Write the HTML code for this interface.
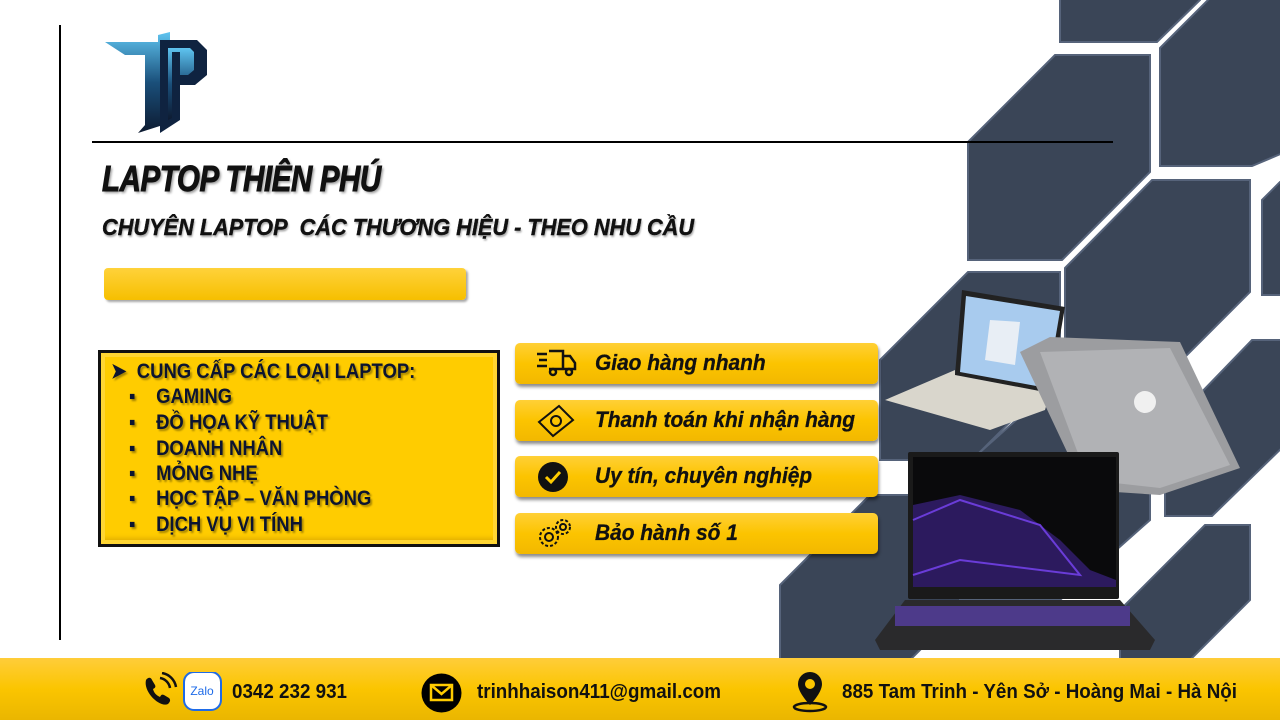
<!DOCTYPE html>
<html><head><meta charset="utf-8"><style>
*{margin:0;padding:0;box-sizing:border-box}
body{width:1280px;height:720px;position:relative;overflow:hidden;background:#fff;font-family:"Liberation Sans",sans-serif}
.abs{position:absolute}
.title{left:102px;top:158px;font-size:36px;font-weight:bold;font-style:italic;color:#111;transform:scaleX(.82);transform-origin:left top;text-shadow:2px 2px 3px rgba(0,0,0,.4);white-space:nowrap;letter-spacing:-0.5px;-webkit-text-stroke:1px #111}
.sub{left:102px;top:214px;font-size:23px;font-weight:bold;font-style:italic;color:#111;transform:scaleX(.945);transform-origin:left top;text-shadow:1px 2px 2px rgba(0,0,0,.35);white-space:nowrap;-webkit-text-stroke:.4px #111}
.bar{left:104px;top:268px;width:362px;height:32px;border-radius:4px;background:linear-gradient(#ffd23a,#f6bf00);box-shadow:2px 2px 2px rgba(0,0,0,.35)}
.box{left:98px;top:350px;width:402px;height:197px;border:3px solid #111;background:#ffcc00;box-shadow:inset 0 0 0 4px #ffd633, inset 0 -6px 4px rgba(200,150,0,.5)}
.box div{position:absolute;font-size:21px;font-weight:bold;color:#0c1430;transform:scaleX(.88);transform-origin:left top;white-space:nowrap;text-shadow:2px 2px 2px rgba(0,0,0,.35)}
.btn{left:515px;width:363px;height:41px;border-radius:5px;background:linear-gradient(#ffd036,#fcc400 50%,#f2b800);box-shadow:1px 3px 3px rgba(0,0,0,.45)}
.btn span{position:absolute;left:80px;top:7px;font-size:22px;font-weight:bold;font-style:italic;color:#111;transform:scaleX(.95);transform-origin:left top;white-space:nowrap;-webkit-text-stroke:.3px #111}
.btn svg{position:absolute;left:20px;top:4px}
.foot{left:0;top:658px;width:1280px;height:62px;background:linear-gradient(#ffcd3a,#fbc500 50%,#eab600)}
.ft{font-size:20px;font-weight:bold;color:#111;top:681px;white-space:nowrap;transform:scaleX(.94);transform-origin:left top}
</style></head><body>
<svg class="abs" style="left:0;top:0" width="1280" height="720">
<g fill="#3a4557" stroke="#56637a" stroke-width="2">
<polygon points="1060,-2 1200,-2 1200,0 1157,42 1060,42"/>
<polygon points="1160,48 1210,-2 1290,-2 1290,150 1252,166 1160,166"/>
<polygon points="968,142 1055,55 1150,55 1150,172 1062,260 968,260"/>
<polygon points="1262,200 1280,182 1290,182 1290,295 1262,295"/>
<polygon points="1065,268 1152,180 1250,180 1250,292 1162,380 1065,380"/>
<polygon points="880,360 968,272 1060,272 1060,372 972,460 880,460"/>
<polygon points="1165,430 1252,340 1290,340 1290,440 1212,516 1165,516"/>
<polygon points="780,585 870,495 960,495 960,610 870,700 780,700"/>
<polygon points="1120,610 1205,525 1250,525 1250,600 1170,680 1120,680"/>
<polygon points="960,470 1050,390 1150,390 1150,520 1060,600 960,600"/>
</g>
<line x1="60" y1="25" x2="60" y2="640" stroke="#000" stroke-width="2"/>
<line x1="92" y1="142" x2="1113" y2="142" stroke="#000" stroke-width="2"/>
<defs><linearGradient id="lg" x1="0" y1="0" x2="0" y2="1"><stop offset="0" stop-color="#5fc4f0"/><stop offset=".5" stop-color="#1a4f7a"/><stop offset="1" stop-color="#0d1a30"/></linearGradient></defs>
<polygon points="105,42 158,42 158,35 170,32 170,42 168,50 163,52 163,125 138,133 145,125 145,55 125,55" fill="url(#lg)"/>
<polygon points="160,40 197,40 207,50 207,75 195,85 180,85 180,120 160,133" fill="#0f2340"/>
<polygon points="168,48 190,48 194,52 194,70 188,75 180,75 180,52 172,52 172,118 168,120" fill="url(#lg)"/>
<polygon points="962,290 1065,307 1050,393 955,375" fill="#222"/>
<polygon points="966,296 1060,311 1047,388 960,372" fill="#a8cbee"/>
<polygon points="990,320 1020,322 1015,365 985,360" fill="#e8eef5"/>
<polygon points="955,375 1050,393 1045,410 990,430 885,400 955,370" fill="#d9d6cc"/>
<polygon points="1020,352 1050,337 1180,342 1240,468 1160,495 1085,490" fill="#9c9da0"/>
<polygon points="1040,352 1170,348 1230,465 1160,488 1088,480" fill="#b1b2b5"/>
<circle cx="1145" cy="402" r="11" fill="#f0f0f0"/>
<rect x="908" y="452" width="211" height="147" rx="2" fill="#1a1a1a"/>
<rect x="913" y="457" width="203" height="130" fill="#0a0a0c"/>
<polygon points="913,505 960,495 1020,510 1060,540 1090,570 1116,580 1116,587 913,587" fill="#2c1a5e"/>
<polyline points="913,520 960,500 1040,525 1080,575 960,560 913,575" fill="none" stroke="#6a3cd8" stroke-width="2"/>
<polygon points="875,640 905,600 1120,600 1155,640 1150,650 880,650" fill="#2a2a2c"/>
<rect x="895" y="606" width="235" height="20" fill="#4d3a8a"/>
</svg>
<div class="abs title">LAPTOP THIÊN PHÚ</div>
<div class="abs sub">CHUYÊN LAPTOP&nbsp; CÁC THƯƠNG HIỆU - THEO NHU CẦU</div>
<div class="abs bar"></div>
<div class="abs box">
<div style="left:10px;top:6px">➤&nbsp; CUNG CẤP CÁC LOẠI LAPTOP:</div>
<div style="left:28px;top:32px">▪&nbsp;&nbsp;&nbsp; GAMING</div>
<div style="left:28px;top:58px">▪&nbsp;&nbsp;&nbsp; ĐỒ HỌA KỸ THUẬT</div>
<div style="left:28px;top:84px">▪&nbsp;&nbsp;&nbsp; DOANH NHÂN</div>
<div style="left:28px;top:109px">▪&nbsp;&nbsp;&nbsp; MỎNG NHẸ</div>
<div style="left:28px;top:134px">▪&nbsp;&nbsp;&nbsp; HỌC TẬP – VĂN PHÒNG</div>
<div style="left:28px;top:160px">▪&nbsp;&nbsp;&nbsp; DỊCH VỤ VI TÍNH</div>
</div>
<div class="abs btn" style="top:343px"><svg width="44" height="32" viewBox="0 0 44 32" fill="none" stroke="#111" stroke-width="2.5"><path d="M2 7h10M4 13h8M2 19h10M14 4h14v18H14M28 9h7l5 7v6h-12"/><circle cx="18" cy="25" r="3"/><circle cx="34" cy="25" r="3"/></svg><span>Giao hàng nhanh</span></div>
<div class="abs btn" style="top:400px"><svg width="44" height="34" viewBox="0 0 44 34" fill="none" stroke="#111" stroke-width="2"><path d="M4 18L24 2l14 14-20 16z"/><circle cx="21" cy="17" r="5"/></svg><span>Thanh toán khi nhận hàng</span></div>
<div class="abs btn" style="top:456px"><svg width="44" height="34" viewBox="0 0 44 34"><circle cx="18" cy="17" r="15" fill="#111"/><path d="M11 17l5 5 9-10" fill="none" stroke="#ffcc00" stroke-width="3"/></svg><span>Uy tín, chuyên nghiệp</span></div>
<div class="abs btn" style="top:513px"><svg width="44" height="34" viewBox="0 0 44 34" fill="none" stroke="#111" stroke-width="2"><circle cx="14" cy="20" r="9" stroke-dasharray="3 2"/><circle cx="14" cy="20" r="4"/><circle cx="28" cy="10" r="7" stroke-dasharray="3 2"/><circle cx="28" cy="10" r="3"/></svg><span>Bảo hành số 1</span></div>
<div class="abs foot"></div>
<svg class="abs" style="left:140px;top:672px" width="90" height="40"><path d="M6 8c2-3 5-3 6 0l3 5c1 2 0 3-2 4 1 4 3 6 7 8 1-2 2-3 4-2l5 3c2 2 1 4-1 6-8 4-25-12-22-24z" fill="#111"/><path d="M20 6a12 12 0 0 1 10 10M22 1a17 17 0 0 1 14 14" stroke="#111" stroke-width="2.5" fill="none"/><rect x="45" y="1" width="35" height="37" rx="9" fill="#fff"/><rect x="44" y="0" width="37" height="38" rx="10" fill="none" stroke="#1e6be8" stroke-width="2"/><text x="62" y="23" font-size="12" fill="#1e6be8" text-anchor="middle" font-family="Liberation Sans">Zalo</text></svg>
<div class="abs ft" style="left:232px">0342 232 931</div>
<svg class="abs" style="left:421px;top:673px" width="41" height="40"><ellipse cx="20.5" cy="20" rx="20" ry="19.5" fill="#000"/><rect x="10" y="12" width="21" height="15" fill="none" stroke="#ffcc00" stroke-width="2.5"/><path d="M10 12l10.5 9 10.5-9" fill="none" stroke="#ffcc00" stroke-width="2.5"/></svg>
<div class="abs ft" style="left:477px">trinhhaison411@gmail.com</div>
<svg class="abs" style="left:790px;top:670px" width="40" height="44"><path d="M20 2a12 12 0 0 1 12 12c0 9-12 21-12 21S8 23 8 14A12 12 0 0 1 20 2z" fill="#111"/><circle cx="20" cy="14" r="5" fill="#fbc500"/><ellipse cx="20" cy="37" rx="16" ry="4" fill="none" stroke="#111" stroke-width="2.5"/></svg>
<div class="abs ft" style="left:842px">885 Tam Trinh - Yên Sở - Hoàng Mai - Hà Nội</div>
</body></html>
